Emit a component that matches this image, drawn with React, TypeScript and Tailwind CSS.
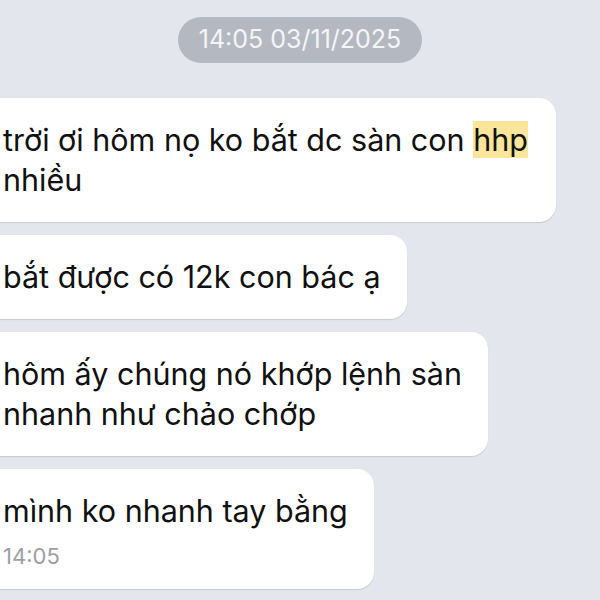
const Bubble = ({ children, className = "" }: { children: React.ReactNode; className?: string }) => (
  <div
    className={`-ml-[23px] rounded-[17px] bg-white px-[26px] py-[22px] text-[30.5px] leading-[40px] text-[#111] shadow-[0_1px_1px_rgba(0,0,0,0.13)] ${className}`}
  >
    {children}
  </div>
);

export default function App() {
  return (
    <div
      className="h-[600px] w-[600px] overflow-hidden bg-[#e3e7ed]"
      style={{ fontFamily: "Inter, 'Noto Sans', sans-serif" }}
    >
      <div className="flex justify-center pt-[17px]">
        <div className="flex h-[46px] items-center rounded-full bg-[#b4b9c1] px-[21px] text-[25px] text-[#f4f5f7]">
          14:05 03/11/2025
        </div>
      </div>

      <div className="mt-[35px] flex flex-col items-start gap-[13px]">
        <Bubble className="w-[579px]">
          trời ơi hôm nọ ko bắt dc sàn con{" "}
          <span className="bg-[#fbe59a]">hhp</span>
          <br />
          nhiều
        </Bubble>

        <Bubble>bắt được có 12k con bác ạ</Bubble>

        <Bubble>
          hôm ấy chúng nó khớp lệnh sàn
          <br />
          nhanh như chảo chớp
        </Bubble>

        <Bubble className="pb-[18px]">
          mình ko nhanh tay bằng
          <div className="mt-[10px] text-[22px] leading-[30px] text-[#9c9ea3]">14:05</div>
        </Bubble>
      </div>
    </div>
  );
}
